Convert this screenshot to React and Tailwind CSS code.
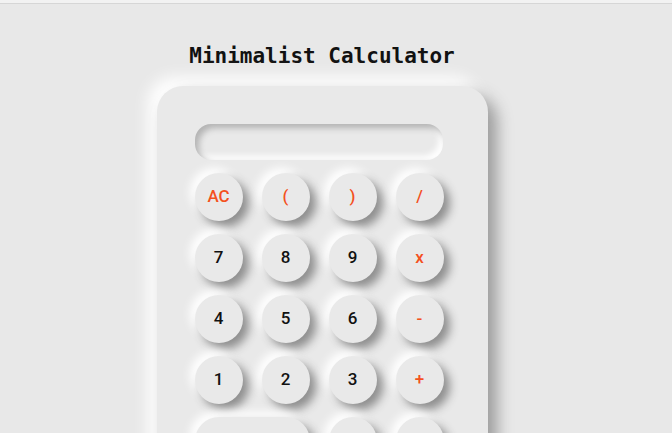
import React from 'react';

const keys = [
  { label: 'AC', op: true },
  { label: '(', op: true },
  { label: ')', op: true },
  { label: '/', op: true },
  { label: '7' },
  { label: '8' },
  { label: '9' },
  { label: 'x', op: true },
  { label: '4' },
  { label: '5' },
  { label: '6' },
  { label: '-', op: true },
  { label: '1' },
  { label: '2' },
  { label: '3' },
  { label: '+', op: true },
  { label: '0', wide: true },
  { label: '.' },
  { label: '=', op: true },
];

const App = () => {
  return (
    <div className="min-h-screen bg-[#e8e8e8] overflow-hidden">
      {/* thin top strip */}
      <div className="h-[3px] bg-[#f2f2f2]" />
      <div className="h-px bg-[#d6d6d6]" />

      <div className="flex flex-col items-center pr-[28px]">
        <h1 className="mt-[38px] text-[21px] leading-[28px] font-bold text-[#111] font-['DejaVu_Sans_Mono',monospace]">
          Minimalist Calculator
        </h1>

        {/* calculator body */}
        <div className="mt-[16px] w-[331px] pl-[38px] pr-[45px] pt-[38px] pb-[40px] rounded-[26px] bg-[#e9e9e9] shadow-[9px_9px_16px_#9c9c9c,-9px_-9px_16px_#ffffff]">
          <div className="h-[36px] rounded-[16px] bg-[#e9e9e9] shadow-[inset_4px_4px_6px_#b3b3b3,inset_-4px_-4px_6px_#ffffff]" />

          <div className="mt-[13px] grid grid-cols-[repeat(4,48px)] gap-x-[19px] gap-y-[13px]">
            {keys.map((k) => (
              <button
                key={k.label}
                className={`h-[48px] flex items-center justify-center bg-[#e9e9e9] shadow-[6px_6px_10px_#8e8e8e,-5px_-5px_10px_#ffffff] text-[17px] font-medium font-['Roboto',sans-serif] ${
                  k.wide ? 'col-span-2 rounded-[24px]' : 'w-[48px] rounded-full'
                } ${k.op ? 'text-[#f4511e]' : 'text-[#111]'}`}
              >
                {k.label}
              </button>
            ))}
          </div>
        </div>
      </div>
    </div>
  );
};

export default App;
